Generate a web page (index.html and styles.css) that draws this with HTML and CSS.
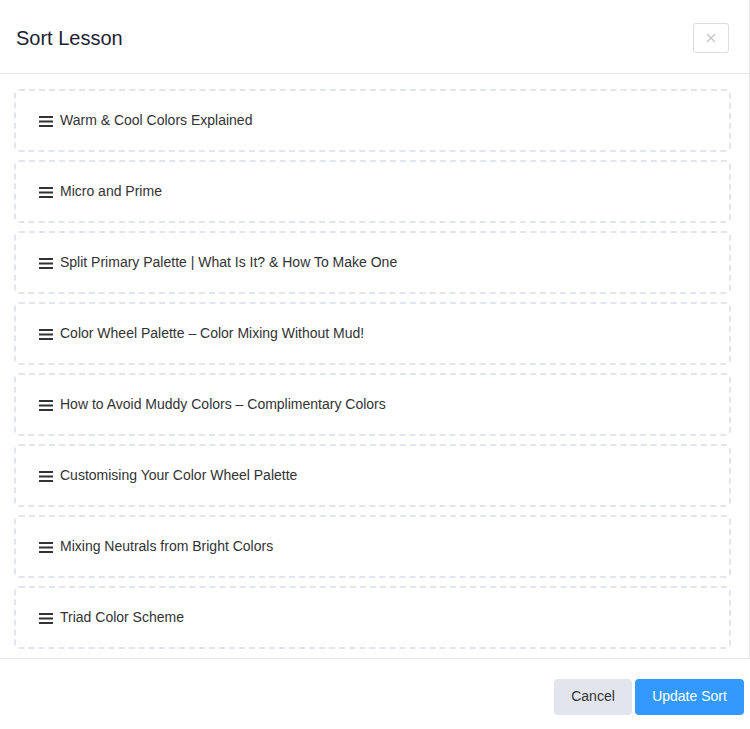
FILE: index.html
```html
<!DOCTYPE html>
<html>
<head>
<meta charset="utf-8">
<link rel="stylesheet" href="styles.css">
</head>
<body>
<div class="modal">
  <div class="main">
    <div class="header">
      <h1 class="title">Sort Lesson</h1>
      <button class="close" aria-label="Close">
        <svg width="10" height="10" viewBox="0 0 10 10"><path d="M1 1L9 9M9 1L1 9" stroke="#c4c4c4" stroke-width="1.2" fill="none"/></svg>
      </button>
    </div>
    <div class="list">
      <div class="item"><span class="handle"><svg width="14" height="11" viewBox="0 0 14 11"><rect y="0" width="14" height="2" fill="#333"/><rect y="4.5" width="14" height="2" fill="#333"/><rect y="9" width="14" height="2" fill="#333"/></svg></span>Warm &amp; Cool Colors Explained</div>
      <div class="item"><span class="handle"><svg width="14" height="11" viewBox="0 0 14 11"><rect y="0" width="14" height="2" fill="#333"/><rect y="4.5" width="14" height="2" fill="#333"/><rect y="9" width="14" height="2" fill="#333"/></svg></span>Micro and Prime</div>
      <div class="item"><span class="handle"><svg width="14" height="11" viewBox="0 0 14 11"><rect y="0" width="14" height="2" fill="#333"/><rect y="4.5" width="14" height="2" fill="#333"/><rect y="9" width="14" height="2" fill="#333"/></svg></span>Split Primary Palette | What Is It? &amp; How To Make One</div>
      <div class="item"><span class="handle"><svg width="14" height="11" viewBox="0 0 14 11"><rect y="0" width="14" height="2" fill="#333"/><rect y="4.5" width="14" height="2" fill="#333"/><rect y="9" width="14" height="2" fill="#333"/></svg></span>Color Wheel Palette – Color Mixing Without Mud!</div>
      <div class="item"><span class="handle"><svg width="14" height="11" viewBox="0 0 14 11"><rect y="0" width="14" height="2" fill="#333"/><rect y="4.5" width="14" height="2" fill="#333"/><rect y="9" width="14" height="2" fill="#333"/></svg></span>How to Avoid Muddy Colors – Complimentary Colors</div>
      <div class="item"><span class="handle"><svg width="14" height="11" viewBox="0 0 14 11"><rect y="0" width="14" height="2" fill="#333"/><rect y="4.5" width="14" height="2" fill="#333"/><rect y="9" width="14" height="2" fill="#333"/></svg></span>Customising Your Color Wheel Palette</div>
      <div class="item"><span class="handle"><svg width="14" height="11" viewBox="0 0 14 11"><rect y="0" width="14" height="2" fill="#333"/><rect y="4.5" width="14" height="2" fill="#333"/><rect y="9" width="14" height="2" fill="#333"/></svg></span>Mixing Neutrals from Bright Colors</div>
      <div class="item"><span class="handle"><svg width="14" height="11" viewBox="0 0 14 11"><rect y="0" width="14" height="2" fill="#333"/><rect y="4.5" width="14" height="2" fill="#333"/><rect y="9" width="14" height="2" fill="#333"/></svg></span>Triad Color Scheme</div>
    </div>
  </div>
  <div class="footer">
    <button class="btn btn-cancel">Cancel</button>
    <button class="btn btn-primary">Update Sort</button>
  </div>
</div>
</body>
</html>
```

FILE: styles.css
```css
* { box-sizing: border-box; }
html, body {
  margin: 0;
  padding: 0;
  background: #fff;
  font-family: "Liberation Sans", Arial, sans-serif;
}
.modal {
  width: 750px;
  height: 729px;
  display: flex;
  flex-direction: column;
}
.main {
  border-right: 1px solid #e6e6e6;
  border-bottom: 1px solid #e6e6e6;
}
.header {
  height: 74px;
  border-bottom: 1px solid #e6e6e6;
  display: flex;
  align-items: center;
  justify-content: space-between;
  padding: 0 20px 0 16px;
}
.title {
  margin: 0;
  font-size: 20px;
  font-weight: 400;
  color: #1d2233;
  padding-top: 3px;
}
.close {
  width: 36px;
  height: 30px;
  border: 1px solid #dcdcdc;
  border-radius: 3px;
  background: #fff;
  display: flex;
  align-items: center;
  justify-content: center;
  padding: 0;
  margin-top: 2px;
}
.list {
  padding: 15px 18px 9px 14px;
  display: flex;
  flex-direction: column;
  gap: 8px;
}
.item {
  height: 63px;
  border: 2px dashed #e2e4ee;
  border-radius: 5px;
  display: flex;
  align-items: center;
  padding: 0 0 2px 23px;
  font-size: 14px;
  color: #333;
}
.handle {
  display: flex;
  margin-right: 7px;
  margin-top: 3px;
}
.footer {
  display: flex;
  justify-content: flex-end;
  gap: 3px;
  padding: 20px 6px 0 0;
}
.btn {
  height: 36px;
  border: none;
  border-radius: 4px;
  font-family: "Liberation Sans", Arial, sans-serif;
  font-size: 14px;
  padding: 0 17px 2px;
}
.btn-cancel {
  width: 78px;
  background: #e3e5ee;
  color: #333;
}
.btn-primary {
  width: 109px;
  background: #3399ff;
  color: #fff;
}
```
